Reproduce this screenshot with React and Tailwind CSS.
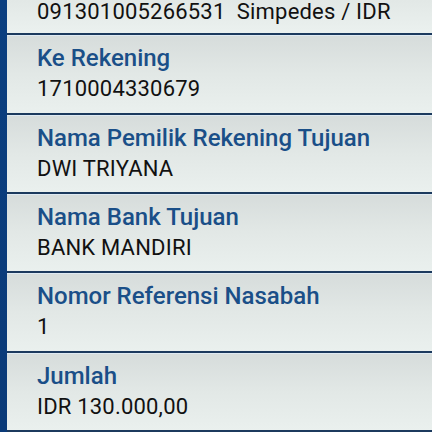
import React from "react";

const rows = [
  { label: "Ke Rekening", value: "1710004330679", h: "h-[80px]" },
  { label: "Nama Pemilik Rekening Tujuan", value: "DWI TRIYANA", h: "h-[79px]" },
  { label: "Nama Bank Tujuan", value: "BANK MANDIRI", h: "h-[79px]" },
  { label: "Nomor Referensi Nasabah", value: "1", h: "h-[80px]" },
  { label: "Jumlah", value: "IDR 130.000,00", h: "h-[79px]" },
];

export default function App() {
  return (
    <div
      className="w-[432px] h-[432px] overflow-hidden flex bg-[#e4eae8]"
      style={{ fontFamily: "Roboto, 'Noto Sans', sans-serif" }}
    >
      <div className="w-[7px] shrink-0 bg-gradient-to-b from-[#0b3f80] to-[#0a3a78]" />
      <div className="flex-1 flex flex-col">
        <div className="h-[33px] shrink-0 bg-gradient-to-b from-[#e2e8e6] to-[#ebf1ef] pl-[30px] pt-px flex items-start">
          <div className="text-[22px] leading-[22px] text-[#111] tracking-[0.2px] whitespace-pre">
            091301005266531  Simpedes / IDR
          </div>
        </div>
        {rows.map((r) => (
          <div
            key={r.label}
            className={`${r.h} shrink-0 flex flex-col border-t-2 border-[#1c3a5e] bg-gradient-to-b from-[#d6dcdb] via-[#e2e8e6] to-[#eaf0ee] pl-[30px] pt-[9px]`}
          >
            <div className="h-px -mt-[9px] mb-[8px] -ml-[30px] bg-[#dfeaf3]" />
            <div className="text-[24px] leading-[28px] text-[#1a4f88] font-medium">
              {r.label}
            </div>
            <div className="text-[22px] leading-[28px] text-[#111] mt-[3px] tracking-[0.2px]">
              {r.value}
            </div>
          </div>
        ))}
        <div className="border-t-2 border-[#1c3a5e] flex-1 bg-[#e4eae8]" />
      </div>
    </div>
  );
}
